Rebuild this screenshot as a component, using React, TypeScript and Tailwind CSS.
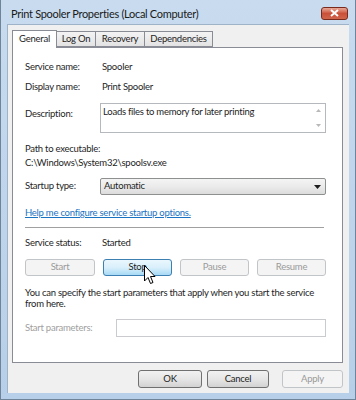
import React from "react";

const font = { fontFamily: "Lato, Roboto, 'Liberation Sans', sans-serif" };

const Btn = ({ label, w, state }: { label: string; w: string; state: "normal" | "hover" | "disabled" }) => {
  const look =
    state === "hover"
      ? "border-[#3c7fb1] bg-gradient-to-b from-[#eaf6fd] via-[#d9f0fc] to-[#a7d9f5] text-[#1e1e1e]"
      : state === "disabled"
      ? "border-[#c2c5c8] bg-[#f4f4f4] text-[#9a9a9a]"
      : "border-[#707070] bg-gradient-to-b from-[#f2f2f2] via-[#e6e6e6] to-[#d2d2d2] text-[#1e1e1e]";
  return (
    <div className={`${w} h-full flex items-center justify-center rounded-[3px] border ${look}`}>
      {label}
    </div>
  );
};

const Row = ({ label, children, className = "" }: { label: string; children?: React.ReactNode; className?: string }) => (
  <div className={`flex items-center h-[14px] ${className}`}>
    <div className="w-[76px] shrink-0">{label}</div>
    <div>{children}</div>
  </div>
);

export default function App() {
  return (
    <div
      style={font}
      className="w-[356px] h-[400px] flex flex-col bg-gradient-to-b from-[#c8dbef] to-[#b7cfe8] border-l border-r border-[#6f8499] text-[9.5px] tracking-[-0.25px] text-[#1e1e1e] overflow-hidden"
    >
      {/* title bar */}
      <div className="h-[24px] shrink-0 flex items-center justify-between pl-[10px] pr-[7px]">
        <span className="text-[11px] text-[#1a1a1a] pt-[4px] tracking-[-0.3px]">
          Print Spooler Properties (Local Computer)
        </span>
        <div className="w-[27px] h-[13px] mt-[2px] rounded-[3px] border border-[#7a2a1c] bg-gradient-to-b from-[#e8a999] via-[#c95039] to-[#d0654c] flex items-center justify-center">
          <svg width="9" height="8" viewBox="0 0 9 8">
            <path d="M1 1 L8 7 M8 1 L1 7" stroke="#fff" strokeWidth="2" />
          </svg>
        </div>
      </div>

      {/* client area */}
      <div className="mx-[6px] h-[369px] shrink-0 bg-[#f0f0f0] border-t border-l border-[#9fb3c8] flex flex-col pl-[4px] pr-[5px]">
        {/* tabs */}
        <div className="flex items-end h-[18px] mt-[4px] relative">
          <div className="w-[45px] h-[18px] bg-white border border-b-0 border-[#898c95] flex items-center justify-center relative top-[1px] z-10">
            General
          </div>
          <div className="w-[39px] h-[16px] bg-gradient-to-b from-[#f3f3f3] to-[#e3e3e3] border border-l-0 border-[#898c95] flex items-center justify-center">
            Log On
          </div>
          <div className="w-[49px] h-[16px] bg-gradient-to-b from-[#f3f3f3] to-[#e3e3e3] border border-l-0 border-[#898c95] flex items-center justify-center">
            Recovery
          </div>
          <div className="w-[68px] h-[16px] bg-gradient-to-b from-[#f3f3f3] to-[#e3e3e3] border border-l-0 border-[#898c95] flex items-center justify-center">
            Dependencies
          </div>
        </div>

        {/* panel */}
        <div className="h-[316px] w-[331px] bg-white border border-[#898c95] flex flex-col pl-[12px] pr-[16px] relative">
          <Row label="Service name:" className="mt-[12px]">
            <span className="pl-[1px]">Spooler</span>
          </Row>
          <Row label="Display name:" className="mt-[6px]">
            <span className="pl-[1px]">Print Spooler</span>
          </Row>

          <div className="flex mt-[9px] h-[30px]">
            <div className="w-[75px] shrink-0 pt-[4px]">Description:</div>
            <div className="flex-1 border border-[#b5b8bd] flex">
              <div className="flex-1 pl-[2px] pt-[1px] leading-[13px]">Loads files to memory for later printing</div>
              <div className="w-[13px] flex flex-col items-center justify-between py-[5px]">
                <svg width="5" height="3" viewBox="0 0 5 3">
                  <path d="M0 3 L2.5 0 L5 3 Z" fill="#b8b8b8" />
                </svg>
                <svg width="5" height="3" viewBox="0 0 5 3">
                  <path d="M0 0 L2.5 3 L5 0 Z" fill="#b8b8b8" />
                </svg>
              </div>
            </div>
          </div>

          <div className="h-[14px] flex items-center mt-[9px]">Path to executable:</div>
          <div className="h-[14px] flex items-center">C:\Windows\System32\spoolsv.exe</div>

          <div className="flex items-center mt-[8px] h-[17px]">
            <div className="w-[75px] shrink-0">Startup type:</div>
            <div className="flex-1 h-full rounded-[2px] border border-[#8e8f8f] bg-gradient-to-b from-[#f4f4f4] via-[#ebebeb] to-[#dcdcdc] flex items-center justify-between pl-[3px] pr-[4px]">
              <span>Automatic</span>
              <svg width="7" height="4" viewBox="0 0 7 4">
                <path d="M0 0 L7 0 L3.5 4 Z" fill="#1e1e1e" />
              </svg>
            </div>
          </div>

          <div className="h-[14px] flex items-center mt-[11px]">
            <span className="text-[#1a73c2] underline decoration-[#1a73c2]">Help me configure service startup options.</span>
          </div>

          <div className="h-px bg-[#a0a0a0] mt-[7px] mr-[2px]" />

          <Row label="Service status:" className="mt-[8px]">
            <span className="pl-[1px]">Started</span>
          </Row>

          <div className="flex gap-[8px] h-[17px] mt-[9px]">
            <Btn label="Start" w="w-[71px]" state="disabled" />
            <Btn label="Stop" w="w-[70px]" state="hover" />
            <Btn label="Pause" w="w-[70px]" state="disabled" />
            <Btn label="Resume" w="w-[70px]" state="disabled" />
          </div>

          <div className="mt-[11px] leading-[11px]">
            You can specify the start parameters that apply when you start the service from here.
          </div>

          <div className="flex items-center mt-[10px] h-[18px]">
            <div className="w-[91px] shrink-0 text-[#a0a0a0]">Start parameters:</div>
            <div className="flex-1 h-full border border-[#c9cbce] bg-white" />
          </div>

          {/* mouse pointer over Stop */}
          <svg
            className="absolute left-[131px] top-[217px]"
            width="12"
            height="20"
            viewBox="0 0 12 20"
          >
            <path
              d="M0.5 0.5 L0.5 16 L4 12.5 L6.5 18.5 L9 17.5 L6.5 11.5 L11 11.5 Z"
              fill="#fff"
              stroke="#000"
              strokeWidth="1"
              strokeLinejoin="round"
            />
          </svg>
        </div>

        {/* dialog buttons */}
        <div className="flex justify-end gap-[5px] h-[18px] mt-[7px] pr-[1px]">
          <Btn label="OK" w="w-[64px]" state="normal" />
          <Btn label="Cancel" w="w-[62px]" state="normal" />
          <div className="w-[3px]" />
          <Btn label="Apply" w="w-[61px]" state="disabled" />
        </div>
      </div>

      <div className="flex-1 border-b border-[#6f8499]" />
    </div>
  );
}
